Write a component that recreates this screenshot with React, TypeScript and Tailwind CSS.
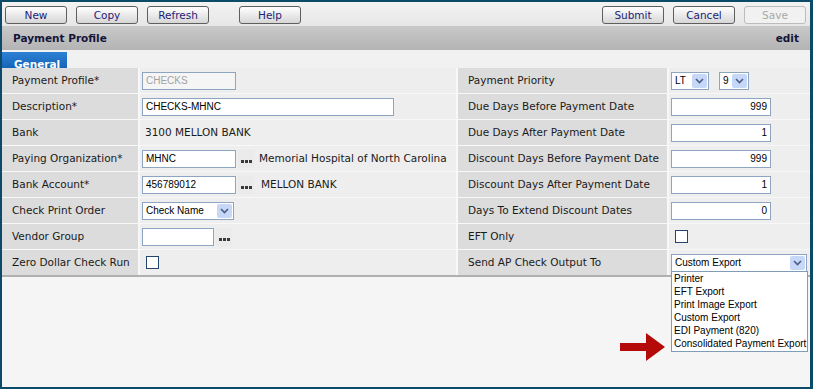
import React from 'react';

const Btn: React.FC<{ label: string; disabled?: boolean }> = ({ label, disabled }) => (
  <button
    className={
      disabled
        ? 'h-[18px] w-[62px] rounded-[3px] border border-[#bcbcbc] bg-[#f1f1f1] text-[10.5px] leading-none text-[#a8a8a8]'
        : 'h-[18px] w-[62px] rounded-[3px] border border-[#5e5e5e] bg-gradient-to-b from-white to-[#d6d6d6] text-[10.5px] leading-none text-[#1d1d76]'
    }
  >
    {label}
  </button>
);

const Input: React.FC<{ value?: string; w: string; disabled?: boolean; right?: boolean }> = ({ value = '', w, disabled, right }) => (
  <div
    className={`${w} flex h-[18px] items-center border border-[#8ea5c2] px-[3px] font-['Liberation_Sans',sans-serif] text-[10px] ${
      disabled ? 'bg-[#f5f5f5] text-[#a3a3a3]' : 'bg-white text-black'
    } ${right ? 'justify-end' : ''}`}
  >
    {value}
  </div>
);

const Select: React.FC<{ value: string; w: string }> = ({ value, w }) => (
  <div className={`${w} flex h-[18px] items-center justify-between border border-[#8ea5c2] bg-white pl-[3px] pr-px font-['Liberation_Sans',sans-serif] text-[10px] text-black`}>
    <span>{value}</span>
    <span className="flex h-[14px] w-[15px] items-center justify-center rounded-[2px] bg-[#c6d7f7]">
      <svg width="9" height="6" viewBox="0 0 9 6">
        <path d="M1 1l3.5 3.5L8 1" fill="none" stroke="#4b5f86" strokeWidth="1.6" />
      </svg>
    </span>
  </div>
);

const Lookup = () => (
  <span className="ml-[2px] flex h-[18px] w-[16px] items-end justify-center gap-px bg-[#ebebeb] pb-[5px]">
    <i className="h-[3px] w-[3px] bg-[#3a3a3a]" />
    <i className="h-[3px] w-[3px] bg-[#3a3a3a]" />
    <i className="h-[3px] w-[3px] bg-[#3a3a3a]" />
  </span>
);

const Check: React.FC<{ ml: string }> = ({ ml }) => (
  <span className={`${ml} h-[13px] w-[13px] border border-[#24466c] bg-white`} />
);

const Label: React.FC<{ text: string }> = ({ text }) => (
  <div className="flex items-center bg-[#dcdcdc] pl-[10px]">{text}</div>
);

const Value: React.FC<{ children?: React.ReactNode; className?: string }> = ({ children, className = '' }) => (
  <div className={`relative flex items-center bg-[#eeeeee] pl-[2px] ${className}`}>{children}</div>
);

const options = ['Printer', 'EFT Export', 'Print Image Export', 'Custom Export', 'EDI Payment (820)', 'Consolidated Payment Export'];

export default function App() {
  return (
    <div className="flex h-[389px] w-[813px] flex-col overflow-hidden border-2 border-r-[3px] border-[#0c4a6a] bg-[#f5f5f5] font-['DejaVu_Sans',sans-serif] text-[10.5px] text-[#1a1a1a]">
      {/* toolbar */}
      <div className="flex h-[24px] shrink-0 items-start justify-between bg-gradient-to-b from-[#f3f3f3] to-[#e7e7e7] pl-[3px] pr-[4px] pt-[4px]">
        <div className="flex gap-[9px]">
          <Btn label="New" />
          <Btn label="Copy" />
          <Btn label="Refresh" />
          <span className="w-[12px]" />
          <Btn label="Help" />
        </div>
        <div className="flex gap-[9px]">
          <Btn label="Submit" />
          <Btn label="Cancel" />
          <Btn label="Save" disabled />
        </div>
      </div>

      {/* header */}
      <div className="flex h-[24px] shrink-0 items-center justify-between bg-gradient-to-b from-[#c9c9c9] to-[#b4b4b4] px-[11px] pt-[2px] font-bold text-[#15153a]">
        <span>Payment Profile</span>
        <span>edit</span>
      </div>

      {/* tab band */}
      <div className="flex h-[18px] shrink-0 items-end bg-[#f1f1f1]">
        <div className="flex h-[16px] w-[65px] items-end bg-gradient-to-b from-[#2d82d6] to-[#1463b6] pl-[12px] font-bold leading-[8px] text-white">
          General
        </div>
      </div>

      {/* form */}
      <div className="grid shrink-0 auto-rows-[25px] grid-cols-[136px_316px_209px_1fr] gap-x-[2px] gap-y-px bg-[#f8f8f8]">
        <Label text="Payment Profile*" />
        <Value><Input value="CHECKS" w="w-[94px]" disabled /></Value>
        <Label text="Payment Priority" />
        <Value>
          <Select value="LT" w="w-[38px]" />
          <span className="w-[10px]" />
          <Select value="9" w="w-[30px]" />
        </Value>

        <Label text="Description*" />
        <Value><Input value="CHECKS-MHNC" w="w-[252px]" /></Value>
        <Label text="Due Days Before Payment Date" />
        <Value><Input value="999" w="w-[100px]" right /></Value>

        <Label text="Bank" />
        <Value className="pl-[5px]">3100 MELLON BANK</Value>
        <Label text="Due Days After Payment Date" />
        <Value><Input value="1" w="w-[100px]" right /></Value>

        <Label text="Paying Organization*" />
        <Value>
          <Input value="MHNC" w="w-[94px]" />
          <Lookup />
          <span className="ml-[5px]">Memorial Hospital of North Carolina</span>
        </Value>
        <Label text="Discount Days Before Payment Date" />
        <Value><Input value="999" w="w-[100px]" right /></Value>

        <Label text="Bank Account*" />
        <Value>
          <Input value="456789012" w="w-[94px]" />
          <Lookup />
          <span className="ml-[7px] pt-px">MELLON BANK</span>
        </Value>
        <Label text="Discount Days After Payment Date" />
        <Value><Input value="1" w="w-[100px]" right /></Value>

        <Label text="Check Print Order" />
        <Value><Select value="Check Name" w="w-[92px]" /></Value>
        <Label text="Days To Extend Discount Dates" />
        <Value><Input value="0" w="w-[100px]" right /></Value>

        <Label text="Vendor Group" />
        <Value>
          <Input w="w-[72px]" />
          <Lookup />
        </Value>
        <Label text="EFT Only" />
        <Value><Check ml="ml-[4px]" /></Value>

        <Label text="Zero Dollar Check Run" />
        <Value><Check ml="ml-[4px]" /></Value>
        <Label text="Send AP Check Output To" />
        <Value className="z-10">
          <div className="relative">
            <Select value="Custom Export" w="w-[136px]" />
            <div className="absolute left-0 top-[17px] w-[137px] border border-[#7f9db9] bg-white pb-px font-['Liberation_Sans',sans-serif] text-[10px] text-black">
              {options.map((o) => (
                <div key={o} className="h-[13px] pl-[2px] leading-[13px]">{o}</div>
              ))}
            </div>
            <svg className="absolute left-[-51px] top-[79px]" width="46" height="28" viewBox="0 0 46 28">
              <path d="M0 10h26V0l19 14-19 14V18H0z" fill="#b50a0a" />
            </svg>
          </div>
        </Value>
      </div>

      <div className="h-[2px] shrink-0 bg-[#b0b0b0]" />
      <div className="flex-1 bg-[#f5f5f5]" />
    </div>
  );
}
